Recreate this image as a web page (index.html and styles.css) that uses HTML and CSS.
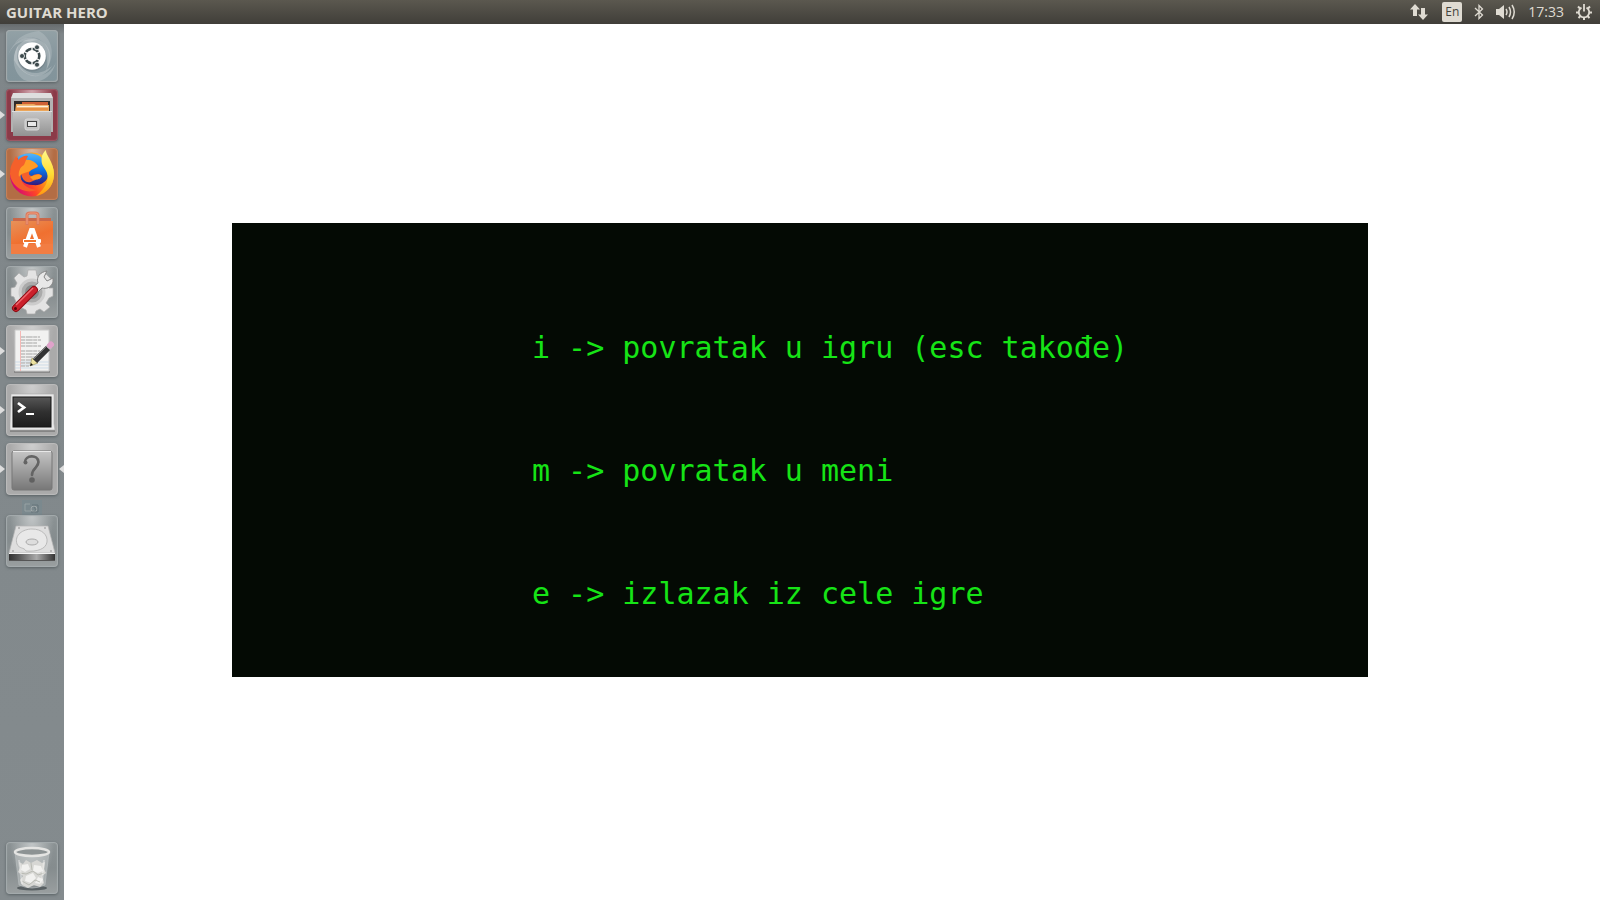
FILE: index.html
```html
<!DOCTYPE html>
<html lang="sr-Latn">
<head>
<meta charset="utf-8">
<title>GUITAR HERO</title>
<link rel="stylesheet" href="styles.css">
</head>
<body>
<div class="desktop">
  <main class="window">
    <section class="pause-menu">
      <ul class="options">
        <li>i -&gt; povratak u igru (esc takođe)</li>
        <li>m -&gt; povratak u meni</li>
        <li>e -&gt; izlazak iz cele igre</li>
      </ul>
    </section>
  </main>

  <header class="topbar">
    <h1 class="app-title">GUITAR HERO</h1>
    <div class="indicators">
      <button class="indicator network" aria-label="Network">
        <svg width="18" height="16" viewBox="0 0 18 16" fill="#dfdbd2"><path d="M5 0L10 5.500H7V12H3V5.500H0ZM11 4H15V10.500H18L13 16L8 10.500H11Z"/></svg>
      </button>
      <button class="indicator keyboard">En</button>
      <button class="indicator" aria-label="Bluetooth">
        <svg width="10" height="16" viewBox="0 0 10 16" fill="none" stroke="#dfdbd2" stroke-width="1.300"><path d="M1 4L8.500 11L5 14.500V1.500L8.500 5L1 12"/></svg>
      </button>
      <button class="indicator" aria-label="Sound">
        <svg width="20" height="16" viewBox="0 0 20 16" fill="none" stroke="#dfdbd2" stroke-width="1.500"><path fill="#dfdbd2" stroke="none" d="M0 5H3L8 1V15L3 11H0Z"/><path d="M10 5Q12 8 10 11M13 3Q16 8 13 13M16 1Q20.500 8 16 15"/></svg>
      </button>
      <time class="clock">17:33</time>
      <button class="indicator" aria-label="Session">
        <svg width="16" height="16" viewBox="0 0 16 16" fill="none" stroke="#dfdbd2"><path stroke-width="1.800" d="M5.500 3.600A5.200 5.200 0 1 0 10.500 3.600M8 0V7.500"/><path stroke-width="2" d="M4 4.500L2 2.500M12 4.500L14 2.500M3 8.500H0M13 8.500H16M4.500 12L2.500 14M11.500 12L13.500 14M8 13.500V16"/></svg>
      </button>
    </div>
  </header>

  <nav class="launcher" aria-label="Launcher">
    <button class="tile dash" aria-label="Search your computer">
      <svg viewBox="0 0 52 52">
        <g fill="#fff"><path opacity=".2" d="M2 26C6 12 18 4 31 9C45 14 48 28 40 41C44 27 38 15 26 12C15 9 6 14 2 26Z"/><path opacity=".22" d="M8 30C8 16 18 6 32 10C20 11 11 20 13 31C16 42 30 49 46 36C38 50 19 51 8 30Z"/><path opacity=".2" d="M18 50C7 43 4 26 13 14C9 26 11 38 22 44C34 49 46 43 50 32C46 49 32 55 18 50Z"/><path opacity=".16" d="M33 1C46 8 50 25 41 38C45 25 43 15 33 9C24 5 14 8 8 14C14 5 24 2 33 1Z"/></g>
        <circle cx="26" cy="27" r="14.500" fill="#66747a" opacity=".4"/><circle cx="26" cy="26" r="13.800" fill="#fff"/>
        <circle cx="26" cy="26" r="7.200" fill="none" stroke="#3d4a4d" stroke-width="2.800"/>
        <g stroke="#fff" stroke-width="1.300"><path d="M26 26L34.700 21M26 26L34.700 31M26 26L17.300 21M26 26L17.300 31M26 26V16M26 26V36"/></g>
        <circle cx="26" cy="26" r="5.800" fill="#fff"/>
        <g fill="#3d4a4d" stroke="#fff" stroke-width=".8"><circle cx="16" cy="26" r="2.500"/><circle cx="31" cy="17.300" r="2.500"/><circle cx="31" cy="34.700" r="2.500"/></g>
      </svg>
    </button>
    <button class="tile files running" aria-label="Files">
      <svg viewBox="0 0 52 52">
        <defs><linearGradient id="cab" x2="0" y2="1"><stop stop-color="#c6c6c6"/><stop offset="1" stop-color="#929292"/></linearGradient></defs>
        <path fill="#dedede" d="M7 4H45L47 9V43H5V9Z"/><path fill="#b2b2b2" d="M5 9H47V43H5Z"/>
        <rect x="8" y="12" width="36" height="11" fill="#302b29"/>
        <path fill="#cf6035" d="M16 13H42V18H16Z"/><path fill="#eba65a" d="M10 15H28L30 16H43V23H9Z"/><path stroke="#fff0df" stroke-width="1.500" d="M11 17.500H42"/><path stroke="#e47b35" d="M10 20H42"/>
        <path fill="url(#cab)" d="M7 22H45V47H7Z"/><path stroke="#ddd" d="M6 22.500H46"/>
        <rect x="19" y="30" width="14" height="11" rx="2" fill="#c4c4c4" stroke="#d8d8d8"/><rect x="21.500" y="32.500" width="9" height="5" fill="#e9e9e9" stroke="#444"/>
      </svg>
    </button>
    <button class="tile firefox running" aria-label="Firefox">
      <svg viewBox="0 0 52 52">
        <defs><linearGradient id="fox" x1="1" y1=".2" x2=".05" y2=".7"><stop stop-color="#ffd33c"/><stop offset=".35" stop-color="#ff9a16"/><stop offset=".65" stop-color="#ff4526"/><stop offset="1" stop-color="#d60a72"/></linearGradient><linearGradient id="globe" x2="0" y2="1"><stop stop-color="#55b5fa"/><stop offset=".5" stop-color="#0878ec"/><stop offset="1" stop-color="#34187c"/></linearGradient><linearGradient id="flame" x2="0" y2="1"><stop stop-color="#fff78a"/><stop offset=".5" stop-color="#ffdf36"/><stop offset="1" stop-color="#ff9711"/></linearGradient></defs>
        <circle cx="26" cy="26.500" r="22" fill="url(#fox)"/>
        <path fill="url(#globe)" d="M12 9C18 4 28 4 35 9L43 25C42 34 34 38 27 37C18 37 12 31 12 23Z"/>
        <path fill="url(#flame)" d="M40 2C39 6 48 14 48 26C48 38 40 46 30 48C40 40 43 32 41 25C39 19 34 18 36 8C37 5 38 4 40 2Z"/>
        <path fill="#f5602b" d="M7 14L10 8L12 12C15 9 19 7 22 8L20 12C24 14 29 13 32 18C31 21 27 20 24 23C22 25 23 28 26 28C29 26 33 25 36 28C34 32 30 31 27 33C20 37 16 31 15 25C13 34 20 41 31 42C18 47 5 38 4 26C4 21 5 17 7 14Z"/>
        <path fill="#ff9b27" d="M20 12C25 11 30 15 32 18C30 20 27 20 24 23C20 25 15 25 13 29C12 24 14 19 18 17ZM24 29C29 27 33 25 36 28C34 32 30 31 27 32Z"/>
      </svg>
    </button>
    <button class="tile" aria-label="Ubuntu Software">
      <svg viewBox="0 0 52 52">
        <defs><linearGradient id="bag" x2=".5" y2="1"><stop stop-color="#e7925a"/><stop offset=".6" stop-color="#f07030"/><stop offset="1" stop-color="#f17b40"/></linearGradient></defs>
        <path fill="#c9674a" d="M7 11H45V16H7Z"/><path fill="url(#bag)" d="M5 14H47V47H5Z"/><path fill="#f27d43" d="M5 37H47V47H5Z"/><path fill="none" stroke="#db785b" stroke-width="3" d="M21 18V8Q21 6 24 6H29Q32 6 32 8V18"/><path fill="none" stroke="#ef9c7c" d="M21 17V8Q21 6 24 6H29Q32 6 32 8V17"/>
        <path fill="none" stroke="#fff" stroke-width="4" d="M19 40L25 23H27L33 40"/><rect x="17" y="32" width="18" height="4" rx="1" fill="#fff"/><path stroke="#ef762e" stroke-width="2" d="M18 34H30"/>
      </svg>
    </button>
    <button class="tile" aria-label="System Settings">
      <svg viewBox="0 0 52 52">
        <path fill="#e3e3e3" stroke="#aaa" stroke-width=".7" d="M22 4H30L31 10L36 12L40 8L45 13L42 18L43 22H47V30L43 32L40 37L44 41L38 46L34 43L30 45L29 48H21L20 44L16 42L11 46L6 40L10 36L8 31L5 30V22L9 21L11 17L8 12L13 7L18 11L21 10Z"/>
        <circle cx="26" cy="26" r="12" fill="#aaa" stroke="#ccc" stroke-width="3"/><circle cx="26" cy="26" r="7" fill="#858989"/>
        <path fill="#e8e8e8" stroke="#858585" d="M41 5L38 11L41 15L47 12V16C45 22 40 23 36 22L30 28L25 23L32 17C30 11 34 6 41 5Z"/>
        <path stroke="#8c0c13" stroke-width="8" stroke-linecap="round" d="M10 42L28 24"/><path stroke="#cb202b" stroke-width="6" stroke-linecap="round" d="M10 42L28 24"/><path stroke="#ef6970" stroke-width="1.500" d="M10 39L27 22"/><circle cx="9.500" cy="42.500" r="1.500" fill="#570509"/>
      </svg>
    </button>
    <button class="tile pale running" aria-label="Text Editor">
      <svg viewBox="0 0 52 52">
        <path fill="#8a8a8a" d="M8 46H44V48H8Z"/><path fill="#f2f2f1" stroke="#c9c9c9" d="M9 5H43V46H9Z"/><path stroke="#f5b8b5" d="M14.500 6V46"/><path stroke="#bfd2e2" stroke-width=".7" d="M9 40H43M9 43H43M9 37H43"/>
        <path stroke="#a4a4a4" stroke-width="1.200" stroke-dasharray="4 .7 7 .5" d="M15 12H34M15 15H35M15 18H31M15 21H35M15 26H34M15 29H36M15 32H35M15 35H29M15 38H26M15 41H23"/>
        <path fill="#ede3a1" stroke="#827b43" stroke-width=".5" d="M24 41L26 33L32 38Z"/><path stroke="#333" stroke-width="6" d="M29 36L42 23"/><path stroke="#777" d="M28 34L41 21"/><path stroke="#bbb" stroke-width="6" d="M42 23L44 21"/><path stroke="#dfa2ca" stroke-width="6" stroke-linecap="round" d="M44 20.500L45 19.500"/><path fill="#111" d="M24 41L25 38L27 40Z"/>
      </svg>
    </button>
    <button class="tile pale running" aria-label="Terminal">
      <svg viewBox="0 0 52 52">
        <defs><linearGradient id="screen" x2="0" y2="1"><stop stop-color="#575757"/><stop offset=".5" stop-color="#303030"/><stop offset="1" stop-color="#1d1d1d"/></linearGradient></defs>
        <path fill="#858585" d="M4 46H49V48H4Z"/><path fill="#e8e8e8" stroke="#aaa" stroke-width=".6" d="M5 10H48V40L49 46H4V40Z"/><rect x="7" y="13" width="38" height="30" fill="url(#screen)" stroke="#151515"/><path fill="none" stroke="#fff" stroke-width="2.800" d="M12 19L18 23.500L12 28"/><path stroke="#fff" stroke-width="2" d="M20 30H28"/>
      </svg>
    </button>
    <button class="tile pale running focused" aria-label="GUITAR HERO">
      <svg viewBox="0 0 52 52">
        <defs><linearGradient id="plate" x2="0" y2="1"><stop stop-color="#c5c5c5"/><stop offset="1" stop-color="#777"/></linearGradient></defs>
        <rect x="6" y="8" width="40" height="39" rx="2" fill="url(#plate)" stroke="#777"/><path stroke="#e8e8e8" d="M7 8.500H45"/><path fill="none" stroke="#646464" stroke-linecap="round" stroke-width="2.600" d="M19 19C19 12 32 11 32.500 19C32.500 25 26 25 26 32"/><path fill="none" stroke="#646464" stroke-width="2" d="M31.500 16C34 22 29 25 27 28"/><circle cx="19.500" cy="19.500" r="2" fill="#646464"/><circle cx="26" cy="37" r="2.800" fill="#606060"/>
      </svg>
    </button>
    <span class="device-ghost" aria-hidden="true">
      <svg width="20" height="15" viewBox="0 0 20 15" fill="none" stroke="#a0a8aa"><path stroke-width=".8" d="M3 4H8M3 11H12M3 4V11"/><circle cx="12" cy="9" r="3"/><path stroke="#66757a" d="M10 5H16V12H9M12 7L14 10"/></svg>
    </span>
    <button class="tile drive" aria-label="Disk">
      <svg viewBox="0 0 52 52">
        <defs><linearGradient id="edge"><stop stop-color="#333"/><stop offset=".2" stop-color="#555"/><stop offset=".6" stop-color="#aaa"/><stop offset="1" stop-color="#333"/></linearGradient></defs>
        <path fill="#555" d="M3 39H49V46H3Z"/><path fill="#dedede" stroke="#b5b5b5" stroke-width=".7" d="M10 11H42L49 38H3Z"/><path fill="#e8e8e8" stroke="#bababa" d="M11 29C8 20 17 14 26 14C36 14 42 20 41 27C40 34 31 37 20 36C18 32 13 34 11 29Z"/><ellipse cx="26" cy="27" rx="6" ry="3" fill="#ddd" stroke="#aaa"/><path fill="url(#edge)" d="M3 39H49V45H3Z"/><path stroke="#f5f5f5" d="M3 38.500H49"/><g fill="#888"><circle cx="13" cy="13" r=".8"/><circle cx="39" cy="13" r=".8"/><circle cx="7" cy="36" r=".8"/><circle cx="45" cy="36" r=".8"/></g>
      </svg>
    </button>
    <button class="tile trash" aria-label="Trash">
      <svg viewBox="0 0 52 52">
        <ellipse cx="26" cy="46" rx="15" ry="2.500" fill="#596063"/><path fill="#c8cccd" fill-opacity=".45" stroke="#b8bdbe" stroke-width=".7" d="M9 10L13 43Q26 49 39 43L43 10Z"/>
        <path fill="#d7d7d4" d="M13 20L17 22L20 18L25 21L31 18L36 21L39 20L38 27L40 31L36 34L38 41L34 45L28 43L22 46L16 43L14 38L17 34L12 30L14 26Z"/><path fill="#f1f1ef" d="M16 23L22 22L24 27L19 30L15 28ZM28 23L35 24L37 29L32 31L27 29ZM20 34L27 31L30 36L25 41L19 39ZM32 35L37 37L34 42L29 41Z"/><path fill="none" stroke="#b0b2aa" stroke-width=".8" d="M14 31L20 32L27 29L32 33L38 31M16 39L23 43L29 38L34 40M25 21L26 28"/>
        <ellipse cx="26" cy="10" rx="17" ry="4" fill="#8d9394" stroke="#e4e4e2" stroke-width="2.500"/><path stroke="#fff" opacity=".35" stroke-width="2" d="M13 18L16 42M38 18L36 41"/>
      </svg>
    </button>
  </nav>
</div>
</body>
</html>
```
FILE: styles.css
```css
* {
  box-sizing: border-box;
}

body {
  margin: 0;
  background: #fff;
  font-family: "Open Sans", "Noto Sans", sans-serif;
}

.desktop {
  display: grid;
  grid-template: 24px 1fr / 64px 1fr;
  min-height: 100vh;
}

.window {
  grid-area: 1 / 1 / -1 / -1;
  display: grid;
  place-items: center;
}

.pause-menu {
  display: grid;
  align-content: end;
  width: 71%;
  min-height: 454px;
  padding: 0 0 22px 300px;
  background: #040a04;
}

.options {
  margin: 0;
  padding: 0;
  list-style: none;
  color: #16e416;
  font-family: "DejaVu Sans Mono", monospace;
  font-size: 30px;
  line-height: 123px;
  white-space: nowrap;
}

.topbar {
  grid-area: 1 / 1 / 2 / -1;
  display: flex;
  align-items: center;
  justify-content: space-between;
  padding: 0 8px 0 6px;
  background: linear-gradient(#5b584f, #403e39);
  color: #dfdbd2;
}

.app-title {
  margin: 0;
  font-size: 15px;
  line-height: 24px;
}

.indicators {
  display: flex;
  align-items: center;
  gap: 12px;
}

.indicator {
  display: flex;
  padding: 0;
  border: 0;
  background: none;
  color: inherit;
}

.network {
  margin-right: 2px;
}

.keyboard {
  justify-content: center;
  width: 20px;
  border-radius: 2px;
  background: #dfdbd2;
  color: #45433d;
  font: 12px/20px "Open Sans", sans-serif;
}

.clock {
  font-size: 14px;
  line-height: 24px;
}

.launcher {
  grid-area: 2 / 1 / 3 / 2;
  display: flex;
  flex-direction: column;
  align-items: center;
  gap: 7px;
  padding: 6px;
  background: linear-gradient(#666b6d, #7f8689 10px, #848b8e);
}

.tile {
  position: relative;
  flex: none;
  width: 52px;
  height: 52px;
  padding: 0;
  border: 0;
  border-radius: 4px;
  background: radial-gradient(ellipse at top, #c3c7c8, transparent 60%), linear-gradient(#8b9294, #858c8e 50%, #9a9fa0);
  box-shadow: inset 0 0 1px 1px #a5abad, 0 1px 3px #596164;
}

.tile svg {
  display: block;
  width: 100%;
}

.dash {
  background: linear-gradient(#93a1a6, #84959c 60%, #82949b);
}

.files {
  background: radial-gradient(ellipse at top, #d3a9b1, transparent 60%), #8b3a48;
  box-shadow: inset 0 0 1px 1px #a05a67, 0 1px 3px #596164;
}

.firefox {
  background: radial-gradient(ellipse at top, #d8b9a4, transparent 60%), #b36d45;
  box-shadow: inset 0 0 1px 1px #c5835d, 0 1px 3px #596164;
}

.pale {
  background: radial-gradient(ellipse at top, #cfcfcf, transparent 60%), #aaa;
  box-shadow: inset 0 0 1px 1px #bcbcbc, 0 1px 3px #596164;
}

.running::before,
.focused::after {
  position: absolute;
  top: 22px;
  border: solid transparent;
  border-width: 4px 5px;
  content: "";
}

.running::before {
  left: -6px;
  border-left-color: #dedede;
  border-right-width: 0;
}

.focused::after {
  right: -6px;
  border-right-color: #dedede;
  border-left-width: 0;
}

.device-ghost {
  height: 15px;
  margin: -2px 0 -4px;
  background: #7b898e;
}

.device-ghost svg {
  display: block;
}

.drive {
  margin-top: -3px;
}

.trash {
  margin-top: auto;
}
```
